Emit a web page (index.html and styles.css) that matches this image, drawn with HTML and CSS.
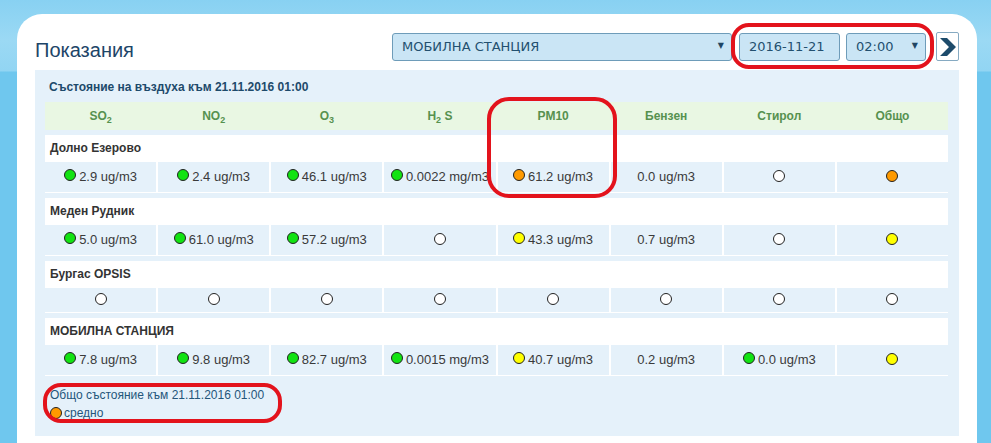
FILE: index.html
```html
<!doctype html>
<html lang="bg">
  <head>
    <meta charset="UTF-8" />
    <meta name="viewport" content="width=device-width, initial-scale=1.0" />
    <title>Показания</title>
    <link rel="stylesheet" href="styles.css">
  </head>

  <body>
    <div class="card">
      <div class="topbar">
        <h1 class="title">Показания</h1>
        <div class="controls">
          <div class="select station">МОБИЛНА СТАНЦИЯ<span class="arrow">&#9660;</span></div>
          <div class="field date">2016-11-21</div>
          <div class="select hour">02:00<span class="arrow">&#9660;</span></div>
          <div class="next">
            <svg width="16" height="18" viewBox="0 0 16 18">
              <polygon points="0,0 7,0 16,9 7,18 0,18 9,9" fill="#1d4b6b" />
            </svg>
          </div>
        </div>
      </div>

      <div class="panel">
        <div class="caption">Състояние на въздуха към 21.11.2016 01:00</div>

        <div class="row head">
          <div>SO<sub>2</sub></div>
          <div>NO<sub>2</sub></div>
          <div>O<sub>3</sub></div>
          <div>H<sub>2</sub> S</div>
          <div>PM10</div>
          <div>Бензен</div>
          <div>Стирол</div>
          <div>Общо</div>
        </div>

        <div class="station-block">
          <div class="name">Долно Езерово</div>
          <div class="row data">
            <div><span class="dot green"></span>2.9 ug/m3</div>
            <div><span class="dot green"></span>2.4 ug/m3</div>
            <div><span class="dot green"></span>46.1 ug/m3</div>
            <div><span class="dot green"></span>0.0022 mg/m3</div>
            <div><span class="dot orange"></span>61.2 ug/m3</div>
            <div>0.0 ug/m3</div>
            <div><span class="dot lone"></span></div>
            <div><span class="dot lone orange"></span></div>
          </div>
        </div>

        <div class="station-block">
          <div class="name">Меден Рудник</div>
          <div class="row data">
            <div><span class="dot green"></span>5.0 ug/m3</div>
            <div><span class="dot green"></span>61.0 ug/m3</div>
            <div><span class="dot green"></span>57.2 ug/m3</div>
            <div><span class="dot lone"></span></div>
            <div><span class="dot yellow"></span>43.3 ug/m3</div>
            <div>0.7 ug/m3</div>
            <div><span class="dot lone"></span></div>
            <div><span class="dot lone yellow"></span></div>
          </div>
        </div>

        <div class="station-block">
          <div class="name">Бургас OPSIS</div>
          <div class="row data short">
            <div><span class="dot lone"></span></div>
            <div><span class="dot lone"></span></div>
            <div><span class="dot lone"></span></div>
            <div><span class="dot lone"></span></div>
            <div><span class="dot lone"></span></div>
            <div><span class="dot lone"></span></div>
            <div><span class="dot lone"></span></div>
            <div><span class="dot lone"></span></div>
          </div>
        </div>

        <div class="station-block">
          <div class="name">МОБИЛНА СТАНЦИЯ</div>
          <div class="row data">
            <div><span class="dot green"></span>7.8 ug/m3</div>
            <div><span class="dot green"></span>9.8 ug/m3</div>
            <div><span class="dot green"></span>82.7 ug/m3</div>
            <div><span class="dot green"></span>0.0015 mg/m3</div>
            <div><span class="dot yellow"></span>40.7 ug/m3</div>
            <div>0.2 ug/m3</div>
            <div><span class="dot green"></span>0.0 ug/m3</div>
            <div><span class="dot lone yellow"></span></div>
          </div>
        </div>

        <div class="summary">
          <div>Общо състояние към 21.11.2016 01:00</div>
          <div><span class="dot orange"></span>средно</div>
        </div>
      </div>
    </div>

    <!-- hand-drawn red highlights -->
    <div class="mark mark-time"></div>
    <div class="mark mark-pm"></div>
    <div class="mark mark-sum"></div>
  </body>
</html>
```

FILE: styles.css
```css
* {
  box-sizing: border-box;
}

body {
  margin: 0;
  height: 443px;
  overflow: hidden;
  font-family: "Liberation Sans", Arial, sans-serif;
  background: linear-gradient(180deg, #88d1f2 0, #9bd9f4 40px, #92d5f3 71px, #6fc7ee 72px, #6fc7ee 100%);
}

.card {
  width: 960px;
  margin: 14px 0 0 17px;
  padding: 0 18px 20px;
  background: #fff;
  border-radius: 25px 25px 0 0;
}

/* title + station / date / hour pickers */
.topbar {
  display: flex;
  justify-content: space-between;
  height: 56px;
}

.title {
  margin: 0;
  padding-top: 24px;
  font-size: 20px;
  line-height: 24px;
  font-weight: normal;
  color: #1d4568;
}

.controls {
  display: flex;
  margin-top: 19px;
  height: 28px;
}

.select,
.field {
  position: relative;
  height: 28px;
  padding-left: 9px;
  border: 1px solid #6e9cb9;
  border-radius: 3px;
  background: #cae5f5;
  font-family: "DejaVu Sans", Verdana, sans-serif;
  font-size: 13px;
  line-height: 26px;
  color: #23506f;
}

.station {
  width: 340px;
}

.date {
  width: 101px;
  margin-left: 7px;
}

.hour {
  width: 80px;
  margin-left: 6px;
}

.arrow {
  position: absolute;
  right: 7px;
  top: 0;
  font-size: 8px;
  line-height: 24px;
  color: #1f4564;
}

.next {
  width: 23px;
  height: 29px;
  margin: -1px 0 0 10px;
  border: 1px solid #86aac2;
  border-radius: 2px;
  background: #fff;
  display: flex;
  align-items: center;
  justify-content: center;
}

/* readings panel */
.panel {
  padding: 6px 11px 14px 10px;
  background: #e5f1fa;
}

.caption {
  padding-left: 4px;
  margin-bottom: 4px;
  font-size: 12px;
  font-weight: bold;
  line-height: 22px;
  color: #1d4a6b;
}

.row {
  display: grid;
  grid-template-columns: repeat(8, 1fr);
  gap: 2px;
}

.head {
  height: 28px;
  background: #e9f7e3;
  margin-bottom: 5px;
}

.head div {
  text-align: center;
  font-size: 12px;
  font-weight: bold;
  line-height: 28px;
  color: #56914f;
}

.head sub {
  font-size: 9px;
  vertical-align: -3px;
  line-height: 0;
}

.station-block {
  margin-bottom: 5px;
}

.name {
  height: 27px;
  padding-left: 5px;
  background: #fff;
  font-size: 12px;
  font-weight: bold;
  line-height: 27px;
  color: #333;
}

.data {
  background: #fff;
  padding-bottom: 1px;
}

.data div {
  height: 30px;
  background: #e5f1fa;
  text-align: center;
  font-size: 13px;
  line-height: 30px;
  color: #3a3a3a;
}

.data.short div {
  height: 24px;
  line-height: 24px;
}

.dot {
  display: inline-block;
  width: 12px;
  height: 12px;
  margin-right: 3px;
  border: 1px solid #222;
  border-radius: 50%;
  background: #fff;
  vertical-align: 0;
}

.dot.lone {
  margin-right: 0;
  vertical-align: -1px;
}

.green {
  background: #12e312;
}

.orange {
  background: #ff9a00;
}

.yellow {
  background: #ffff00;
}

.summary {
  margin-top: 10px;
  padding-left: 5px;
  font-size: 12px;
  line-height: 18px;
  color: #24567a;
}

.summary .dot {
  margin-right: 2px;
  vertical-align: -2px;
}

/* red outlines drawn over the page */
.mark {
  position: absolute;
  border: 4px solid #e3131c;
  border-radius: 18px;
}

.mark-time {
  left: 731px;
  top: 23px;
  width: 203px;
  height: 46px;
}

.mark-pm {
  left: 487px;
  top: 97px;
  width: 130px;
  height: 101px;
  border-radius: 22px;
}

.mark-sum {
  left: 43px;
  top: 383px;
  width: 239px;
  height: 40px;
}
```
